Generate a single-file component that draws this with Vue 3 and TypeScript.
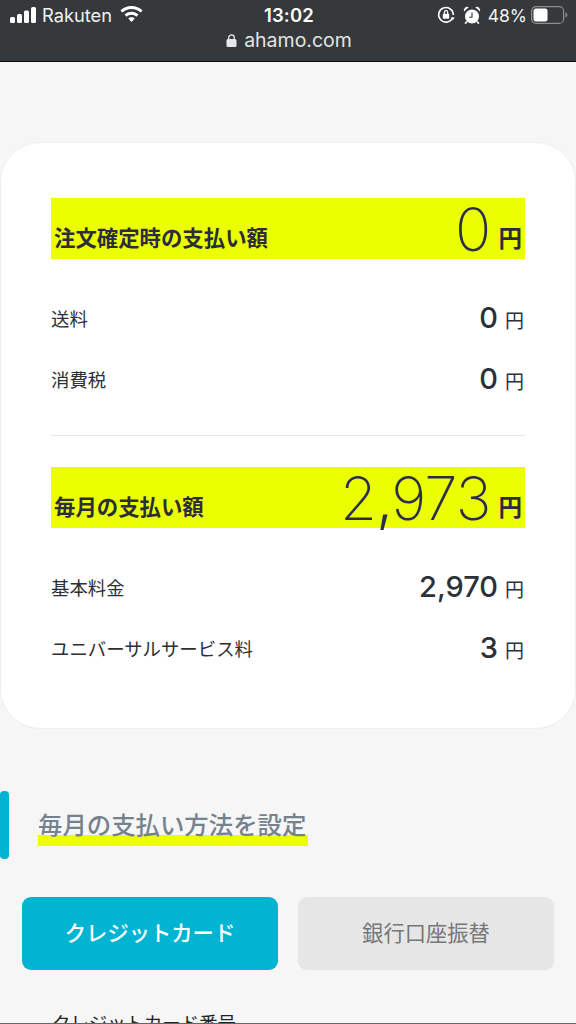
<script setup lang="ts">
interface Row { label: string; value: string }
const firstRows: Row[] = [
  { label: '送料', value: '0' },
  { label: '消費税', value: '0' },
]
const monthlyRows: Row[] = [
  { label: '基本料金', value: '2,970' },
  { label: 'ユニバーサルサービス料', value: '3' },
]
</script>

<template>
  <div class="page">
    <header class="browser">
      <div class="status">
        <div class="left">
          <svg class="signal" width="26" height="16" viewBox="0 0 26 16" fill="#fff">
            <rect x="0" y="10" width="5" height="6" rx="1.5" />
            <rect x="7" y="7" width="5" height="9" rx="1.5" />
            <rect x="14" y="3.500" width="5" height="12.500" rx="1.5" />
            <rect x="21" y="0" width="5" height="16" rx="1.5" />
          </svg>
          <span class="carrier">Rakuten</span>
          <svg class="wifi" width="23" height="17" viewBox="0 0 23 17" fill="#fff">
            <path d="M11.500 0C7.200 0 3.300 1.700.4 4.400l2.100 2.200C4.800 4.400 8 3 11.500 3s6.700 1.400 9 3.600l2.100-2.200C19.700 1.700 15.800 0 11.500 0z" />
            <path d="M11.500 5.800c-2.700 0-5.200 1.100-7 2.800l2.100 2.200c1.300-1.200 3-2 4.900-2s3.600.8 4.900 2l2.100-2.200c-1.800-1.700-4.300-2.800-7-2.800z" />
            <path d="M11.500 11.300c-1.300 0-2.400.5-3.200 1.300l3.200 3.400 3.200-3.400c-.8-.8-1.900-1.300-3.200-1.300z" />
          </svg>
        </div>
        <div class="time">13:02</div>
        <div class="right">
          <svg class="rotation" width="18" height="18" viewBox="0 0 18 18">
            <path d="M15.800 11.500A7.300 7.300 0 1 1 16.300 9" fill="none" stroke="#fff" stroke-width="1.600" />
            <path d="M13.800 11.500h4l-2 2.800z" fill="#fff" />
            <rect x="5.800" y="7.800" width="6.400" height="5" rx="1" fill="#fff" />
            <path d="M7.300 8V6.400a1.700 1.700 0 0 1 3.400 0V8" fill="none" stroke="#fff" stroke-width="1.200" />
          </svg>
          <svg class="alarm" width="18" height="19" viewBox="0 0 18 19">
            <circle cx="9" cy="10.500" r="7" fill="#fff" />
            <path d="M1 5.500a3.400 3.400 0 0 1 4.800-4.200zM17 5.500a3.400 3.400 0 0 0-4.800-4.200z" fill="#fff" />
            <path d="M3.800 15.500l-1.600 2.200M14.200 15.500l1.600 2.200" stroke="#fff" stroke-width="1.600" />
            <path d="M9 6.500v4.700H6.200" fill="none" stroke="#35393c" stroke-width="1.100" />
          </svg>
          <span class="percent">48%</span>
          <svg class="battery" width="37" height="18" viewBox="0 0 37 18">
            <rect x="0.600" y="0.600" width="32" height="16.800" rx="4.500" fill="none" stroke="#8b8e90" stroke-width="1.200" />
            <rect x="2.500" y="2.500" width="14" height="13" rx="2.500" fill="#fff" />
            <path d="M34.500 6.500c1.200.3 1.800 1.300 1.800 2.500s-.6 2.200-1.800 2.500z" fill="#8b8e90" />
          </svg>
        </div>
      </div>
      <div class="address">
        <svg width="11" height="13" viewBox="0 0 11 13" fill="#e8e8e8">
          <rect x="0.500" y="5" width="10" height="8" rx="1.500" />
          <path d="M2.700 5.500V3.700a2.800 2.800 0 0 1 5.600 0v1.800" fill="none" stroke="#e8e8e8" stroke-width="1.300" />
        </svg>
        <span>ahamo.com</span>
      </div>
    </header>

    <main class="content">
      <section class="card">
        <div class="total">
          <span class="total-label">注文確定時の支払い額</span>
          <span class="total-value"><b class="big">0</b><b class="unit">円</b></span>
        </div>
        <div class="rows">
          <div v-for="row in firstRows" :key="row.label" class="row">
            <span class="row-label">{{ row.label }}</span>
            <span class="row-value"><b class="num">{{ row.value }}</b><span class="yen">円</span></span>
          </div>
        </div>
        <hr class="divider" />
        <div class="total">
          <span class="total-label">毎月の支払い額</span>
          <span class="total-value"><b class="big">2<span class="comma">,</span>973</b><b class="unit">円</b></span>
        </div>
        <div class="rows">
          <div v-for="row in monthlyRows" :key="row.label" class="row">
            <span class="row-label">{{ row.label }}</span>
            <span class="row-value"><b class="num">{{ row.value }}</b><span class="yen">円</span></span>
          </div>
        </div>
      </section>

      <h2 class="heading"><span class="heading-text">毎月の支払い方法を設定</span></h2>

      <div class="tabs">
        <button class="tab active" type="button">クレジットカード</button>
        <button class="tab" type="button">銀行口座振替</button>
      </div>

      <div class="field-label">クレジットカード番号</div>
    </main>
  </div>
</template>

<style scoped>
.page {
  box-sizing: border-box;
  width: 576px;
  height: 1024px;
  overflow: hidden;
  background: #f6f6f6;
  border-bottom: 1px solid #666;
  color: #2b2e3a;
  font-family: "Inter", "Noto Sans CJK JP", sans-serif;
  position: relative;
}
.browser {
  background: #35393c;
  border-bottom: 1px solid #0c0c0c;
  color: #fff;
  padding: 4px 8px 0 10px;
  box-sizing: content-box;
  height: 57px;
}
.status {
  display: grid;
  grid-template-columns: 1fr auto 1fr;
  align-items: center;
  height: 22px;
}
.left, .right {
  display: flex;
  align-items: center;
}
.right { justify-content: flex-end; }
.carrier {
  font-size: 18.300px;
  margin-left: 6px;
  color: #f2f2f2;
}
.wifi { margin-left: 8px; margin-top: -2px; }
.time {
  font-size: 18.500px;
  font-weight: 600;
  letter-spacing: 0.200px;
}
.rotation { margin-right: 8px; }
.alarm { margin-right: 7px; }
.percent { font-size: 17.500px; margin-right: 4px; color: #f2f2f2; }
.address {
  display: flex;
  justify-content: center;
  align-items: center;
  gap: 7px;
  height: 28px;
  font-size: 19.500px;
  color: #e4e4e4;
}
.content {
  padding-top: 80px;
}
.card {
  box-sizing: border-box;
  height: 587px;
  background: #fff;
  border: 1px solid #eeeeee;
  border-radius: 40px;
  padding: 55px 50px 0;
}
.total {
  height: 61px;
  background: #ebff00;
  display: flex;
  justify-content: space-between;
  align-items: flex-end;
  padding: 0 3px;
}
.total-label {
  font-size: 21.400px;
  font-weight: 700;
  line-height: 30px;
  margin-bottom: 6px;
  color: #2b2e3a;
}
.total-value {
  display: flex;
  align-items: baseline;
  line-height: 60px;
  height: 60px;
}
.big {
  font-size: 60px;
  font-weight: 250;
  letter-spacing: -0.800px;
  color: #2b2e4a;
}
.comma {
  font-weight: 350;
  letter-spacing: -2px;
}
.unit {
  align-self: flex-end;
  font-size: 23.500px;
  font-weight: 700;
  line-height: 30px;
  margin-bottom: 5px;
  margin-left: 8px;
}
.rows {
  display: flex;
  flex-direction: column;
}
.rows .row:first-child { margin-top: 40px; }
.row {
  height: 61px;
  display: flex;
  justify-content: space-between;
  align-items: flex-start;
}
.row-label {
  font-size: 18.400px;
  line-height: 40px;
  color: #2c2f33;
}
.row-value {
  display: flex;
  align-items: baseline;
  line-height: 40px;
  margin-top: -1px;
  padding-right: 1px;
}
.num {
  font-size: 29px;
  font-weight: 500;
  color: #2c3038;
}
.yen {
  font-size: 19px;
  margin-left: 7px;
  color: #2c3038;
}
.divider {
  border: 0;
  border-top: 1px solid #e8e8e8;
  margin: 14px 0 31px;
}
.heading {
  position: relative;
  margin: 62px 0 0;
  height: 68px;
  padding-left: 38px;
  display: flex;
  align-items: center;
  font-weight: 500;
}
.heading::before {
  content: "";
  position: absolute;
  left: 0;
  top: 0;
  width: 9px;
  height: 68px;
  border-radius: 4px;
  background: #00b4d2;
}
.heading-text {
  font-size: 24.400px;
  line-height: 32px;
  color: #74828e;
  background: linear-gradient(transparent 26px, #ebff00 26px, #ebff00 37px);
  padding-right: 2px;
  height: 37px;
  margin-top: 4px;
}
.tabs {
  display: flex;
  gap: 20px;
  padding: 38px 22px 0;
}
.tab {
  flex: 1;
  height: 73px;
  border: 0;
  border-radius: 9px;
  background: #e6e6e6;
  color: #777;
  font: inherit;
  font-size: 21.300px;
  padding-bottom: 5px;
}
.tab.active {
  background: #00b4d2;
  color: #fff;
  font-weight: 500;
}
.field-label {
  margin: 39px 0 0 52px;
  font-size: 18.400px;
  line-height: 28px;
  color: #222;
}
</style>

<style>
html, body { margin: 0; overflow: hidden; }
</style>
